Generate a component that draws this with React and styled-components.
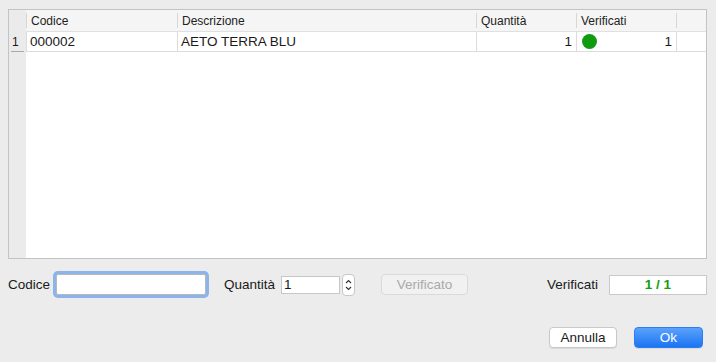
import React from 'react';
import styled, { createGlobalStyle } from 'styled-components';

const GlobalStyle = createGlobalStyle`
  html, body {
    margin: 0;
    padding: 0;
    background: #ececec;
    font-family: 'Liberation Sans', Arial, sans-serif;
    color: #1a1a1a;
  }
`;

const Window = styled.div`
  width: 716px;
  height: 362px;
  box-sizing: border-box;
  padding: 9px 9px 0 8px;
  display: flex;
  flex-direction: column;
  background: #ececec;
`;

const Table = styled.div`
  height: 250px;
  box-sizing: border-box;
  border: 1px solid #c3c3c3;
  background: #fff;
  display: grid;
  grid-template-columns: 17px 151px 299px 100px 100px 1fr;
  grid-template-rows: 22px 20px 1fr;
`;

const HeaderCell = styled.div`
  background: #f5f5f5;
  border-bottom: 1px solid #e0e0e0;
  font-size: 12px;
  color: #222;
  display: flex;
  align-items: center;
  padding-left: 5px;
  position: relative;
  &::before {
    content: '';
    position: absolute;
    left: 0;
    top: 3px;
    bottom: 3px;
    width: 1px;
    background: #d6d6d6;
  }
`;

const Corner = styled.div`
  background: #ebebeb;
`;

const RowHead = styled.div`
  background: #ebebeb;
  font-size: 12px;
  display: flex;
  align-items: center;
  padding-left: 3px;
  position: relative;
  &::after {
    content: '';
    position: absolute;
    left: 2px;
    right: 2px;
    bottom: 0;
    height: 1px;
    background: #a9a9a9;
  }
`;

const Cell = styled.div`
  font-size: 13.5px;
  display: flex;
  align-items: center;
  justify-content: ${(p) => p.$justify || 'flex-start'};
  padding: 0 4px 0 3px;
  border-left: 1px solid #dcdcdc;
  border-bottom: 1px solid #dcdcdc;
`;

const Dot = styled.span`
  width: 15px;
  height: 15px;
  border-radius: 50%;
  background: #0f9b0f;
  margin-left: 2px;
`;

const Filler = styled.div`
  background: ${(p) => (p.$gray ? '#ebebeb' : '#fff')};
  grid-column: ${(p) => (p.$gray ? '1' : '2 / -1')};
`;

const FieldRow = styled.div`
  display: flex;
  align-items: center;
  margin-top: 13px;
  height: 25px;
  font-size: 13.5px;
`;

const Label = styled.span`
  margin-right: ${(p) => p.$gap || 5}px;
  margin-left: ${(p) => p.$left || 0}px;
`;

const FocusInput = styled.div`
  width: 148px;
  height: 19px;
  background: #fff;
  border: 1px solid #b9b9b9;
  box-shadow: 0 0 0 3px #8db3ec;
  border-radius: 2px;
  margin-left: 2px;
`;

const NumInput = styled.div`
  width: 55px;
  height: 16px;
  background: #fff;
  border: 1px solid #c7c7c7;
  font-size: 13.5px;
  padding-left: 2px;
  display: flex;
  align-items: center;
`;

const Stepper = styled.div`
  width: 11px;
  height: 20px;
  margin-left: 2px;
  border: 1px solid #c7c7c7;
  border-radius: 4px;
  background: #fff;
  display: flex;
  align-items: center;
  justify-content: center;
`;

const DisabledButton = styled.div`
  margin-left: 26px;
  width: 85px;
  height: 19px;
  border: 1px solid #dadada;
  border-radius: 4px;
  background: #f1f1f1;
  color: #a9a9a9;
  font-size: 13.5px;
  display: flex;
  align-items: center;
  justify-content: center;
`;

const Spacer = styled.div`
  flex: 1;
`;

const Count = styled.div`
  width: 96px;
  height: 18px;
  border: 1px solid #c9c9c9;
  background: #fff;
  color: #10a010;
  font-weight: bold;
  font-size: 13.5px;
  display: flex;
  align-items: center;
  justify-content: center;
`;

const Actions = styled.div`
  display: flex;
  justify-content: flex-end;
  gap: 17px;
  margin-top: 30px;
  padding-right: 4px;
`;

const Button = styled.div`
  width: ${(p) => p.$w}px;
  height: 19px;
  border-radius: 4px;
  font-size: 13.5px;
  display: flex;
  align-items: center;
  justify-content: center;
  border: 1px solid ${(p) => (p.$primary ? '#2a7ef0' : '#c8c8c8')};
  color: ${(p) => (p.$primary ? '#fff' : '#1a1a1a')};
  background: ${(p) =>
    p.$primary ? 'linear-gradient(#5aa2fb, #1c74f4)' : '#fff'};
  box-shadow: 0 1px 0 rgba(0, 0, 0, 0.08);
`;

const App = () => (
  <Window>
    <GlobalStyle />
    <Table>
      <Corner />
      <HeaderCell>Codice</HeaderCell>
      <HeaderCell>Descrizione</HeaderCell>
      <HeaderCell>Quantità</HeaderCell>
      <HeaderCell>Verificati</HeaderCell>
      <HeaderCell />
      <RowHead>1</RowHead>
      <Cell>000002</Cell>
      <Cell>AETO TERRA BLU</Cell>
      <Cell $justify="flex-end">1</Cell>
      <Cell $justify="space-between">
        <Dot />
        1
      </Cell>
      <Cell />
      <Filler $gray />
      <Filler />
    </Table>
    <FieldRow>
      <Label $gap={4}>Codice</Label>
      <FocusInput />
      <Label $left={18} $gap={6}>Quantità</Label>
      <NumInput>1</NumInput>
      <Stepper>
        <svg width="7" height="14" viewBox="0 0 7 14">
          <path d="M1 5 L3.5 2.5 L6 5 M1 9 L3.5 11.5 L6 9" fill="none" stroke="#333" strokeWidth="1.1" />
        </svg>
      </Stepper>
      <DisabledButton>Verificato</DisabledButton>
      <Spacer />
      <Label $gap={11}>Verificati</Label>
      <Count>1 / 1</Count>
    </FieldRow>
    <Actions>
      <Button $w={66}>Annulla</Button>
      <Button $w={67} $primary>Ok</Button>
    </Actions>
  </Window>
);

export default App;
